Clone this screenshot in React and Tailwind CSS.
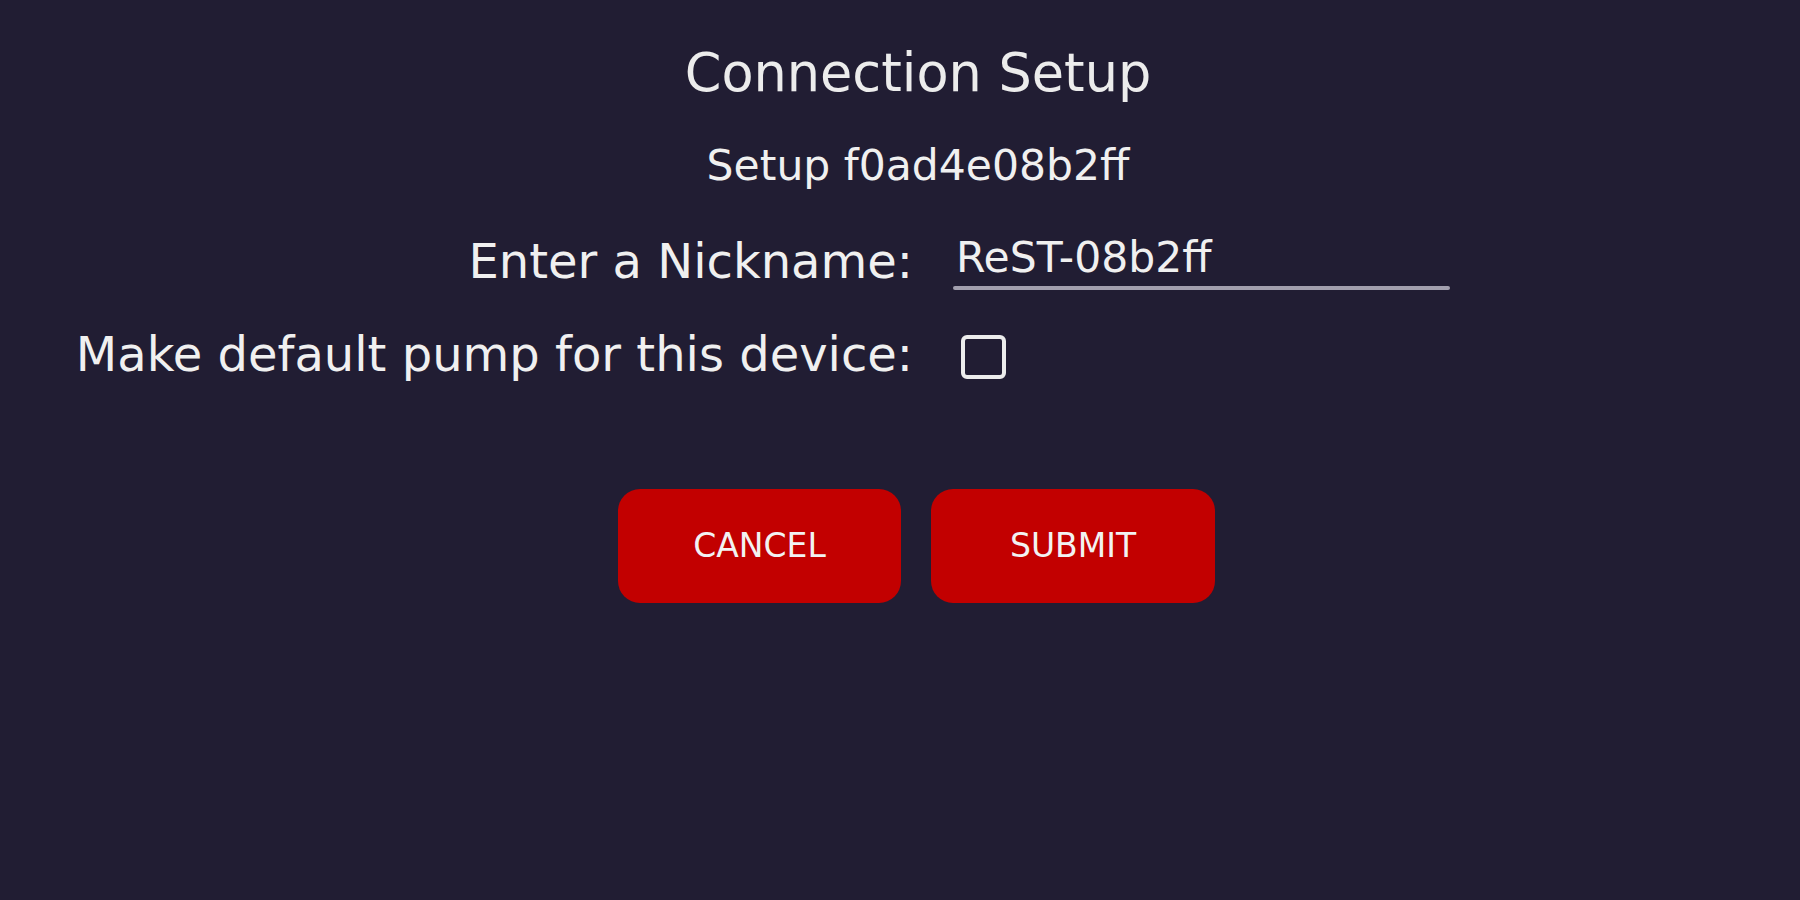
export default function App() {
  return (
    <div
      className="w-[1800px] h-[900px] bg-[#211d33] text-[#f0f0f0] overflow-hidden"
      style={{ fontFamily: '"DejaVu Sans", "Liberation Sans", sans-serif' }}
    >
      <div className="flex flex-col items-center pl-[36px] pt-[43px]">
        <h1 className="text-[52.5px] leading-[60px] h-[60px] text-[#ececec]">Connection Setup</h1>
        <p className="mt-[38px] text-[42.5px] leading-[50px] h-[50px]">Setup f0ad4e08b2ff</p>
      </div>

      <div className="mt-[42px] flex flex-col">
        <div className="flex items-start gap-[40px]">
          <div className="w-[913px] text-right text-[48px] leading-[56px] h-[56px]">Enter a Nickname:</div>
          <div className="w-[497px]">
            <div className="pl-[3px] text-[42.5px] leading-[50px] h-[48px]">ReST-08b2ff</div>
            <div className="mt-[5px] h-[4px] rounded-full bg-[#a29fae]" />
          </div>
        </div>

        <div className="mt-[36px] flex items-start gap-[40px]">
          <div className="w-[913px] text-right text-[48px] leading-[56px] h-[56px]">
            Make default pump for this device:
          </div>
          <div className="w-[497px] pt-[9px]">
            <div className="ml-[8px] w-[45px] h-[44px] rounded-[6px] border-[4px] border-[#ececec]" />
          </div>
        </div>
      </div>

      <div className="mt-[107px] flex justify-center gap-[30px] pl-[33px]">
        <button className="w-[283px] h-[114px] rounded-[22px] bg-[#c20000] text-[33px] text-[#f2f2f2]">
          CANCEL
        </button>
        <button className="w-[284px] h-[114px] rounded-[22px] bg-[#c20000] text-[33px] text-[#f2f2f2]">
          SUBMIT
        </button>
      </div>
    </div>
  );
}
